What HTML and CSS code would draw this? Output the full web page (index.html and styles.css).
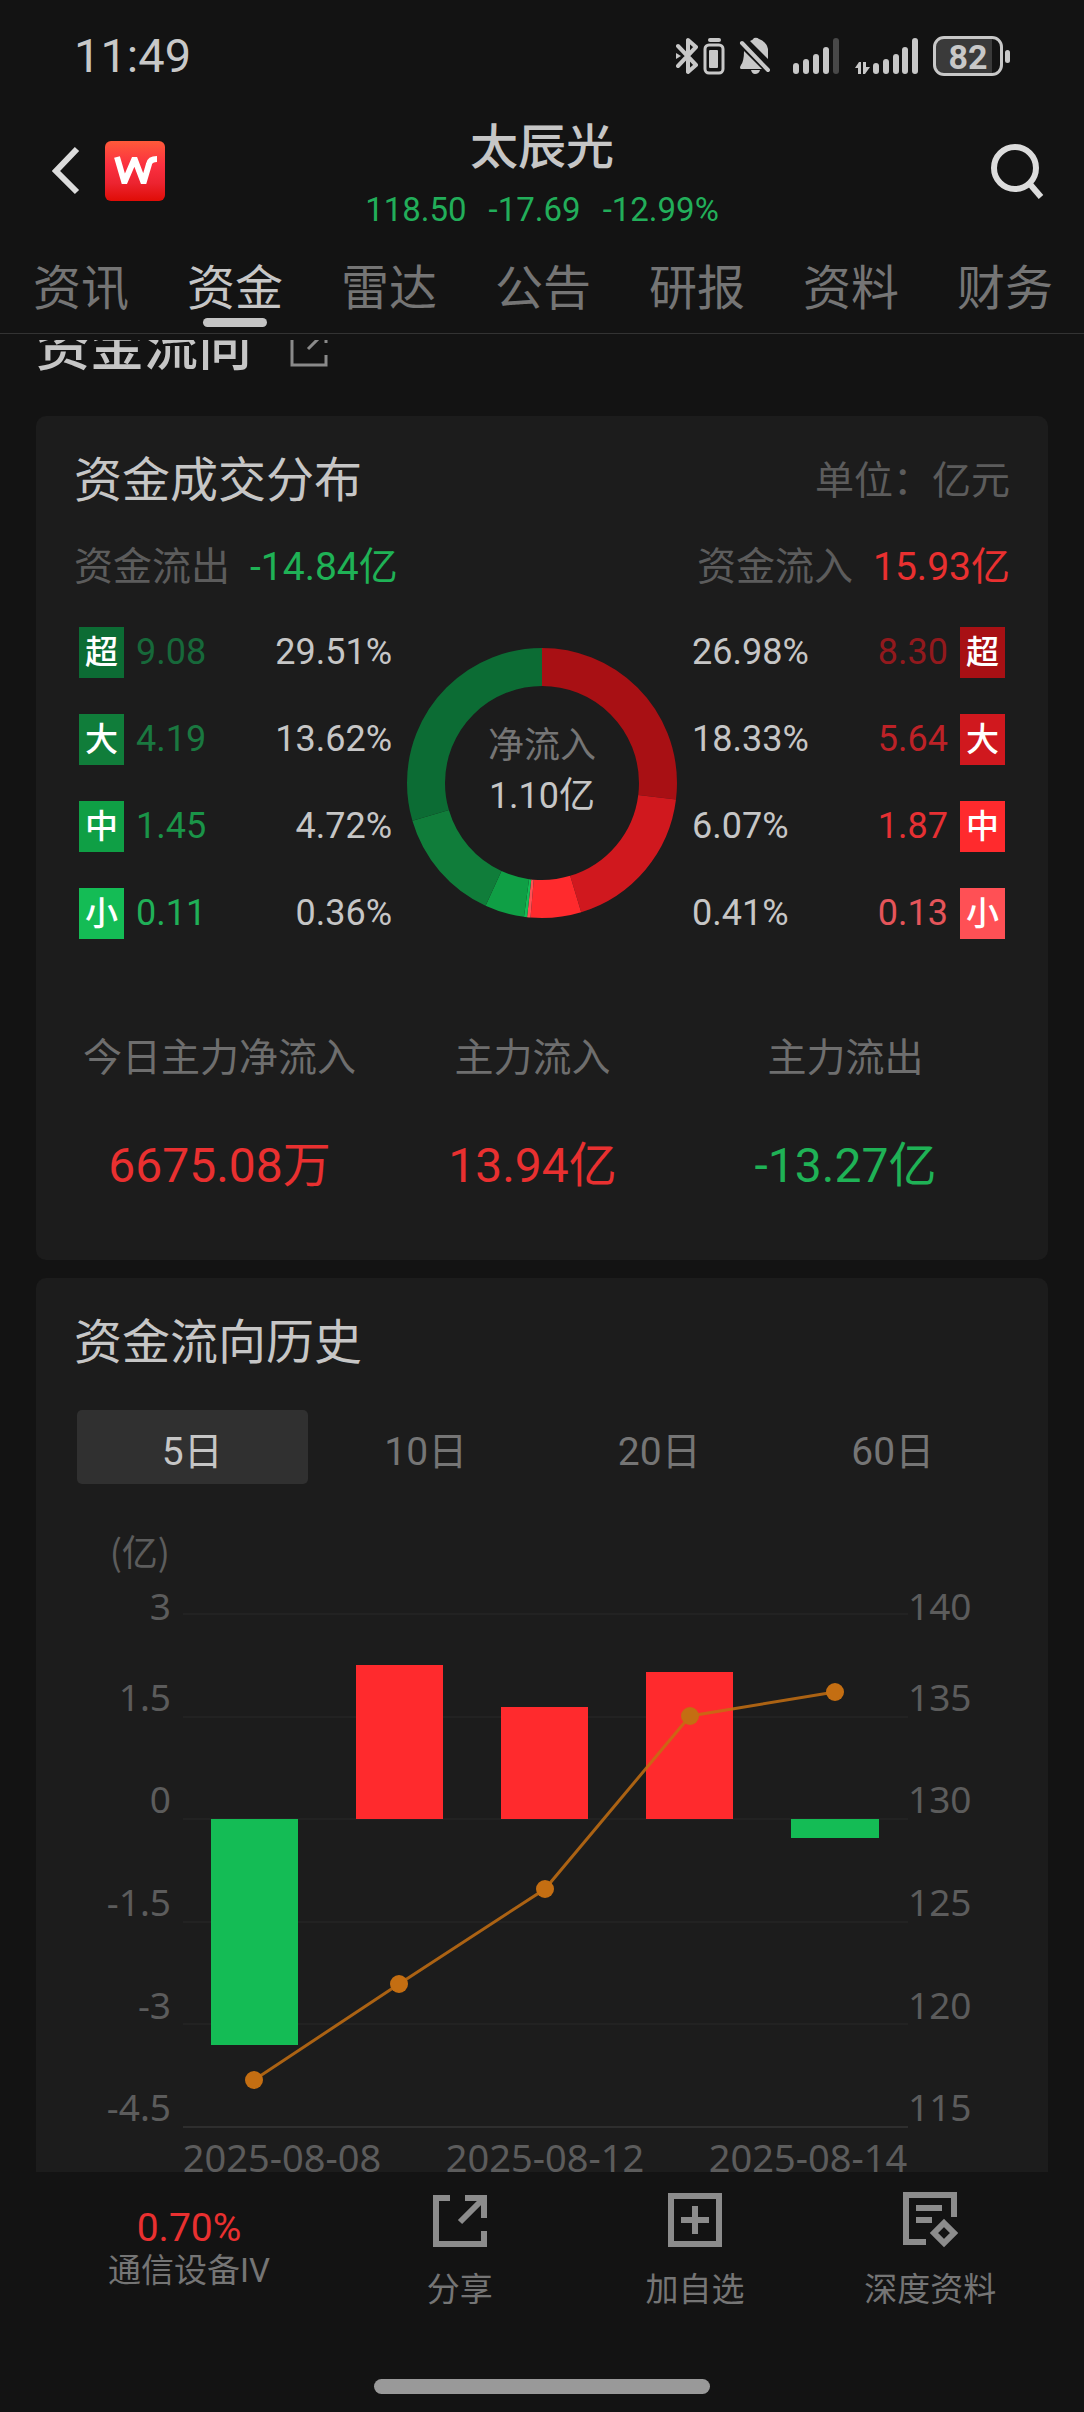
FILE: index.html
```html
<!DOCTYPE html>
<html lang="zh-CN">
<head>
<meta charset="utf-8">
<meta name="viewport" content="width=device-width, initial-scale=1">
<title>太辰光 资金</title>
<link rel="stylesheet" href="styles.css">
</head>
<body>
<div class="app">
  <header class="top">
    <div class="status">
      <time class="clock">11:49</time>
      <div class="status-icons">
        <svg class="i-bt" width="22" height="38" viewBox="0 0 22 38" fill="none" stroke="#c8c8c8" stroke-width="4" stroke-linecap="round" stroke-linejoin="round"><path d="M2 9L20 28L12 35V24M2 29L20 10L12 3V15"/><path d="M0 16L5 19L0 22Z" fill="#c8c8c8" stroke="none"/></svg>
        <svg class="i-cell" width="22" height="38" viewBox="0 0 22 38"><rect x="5" y="1" width="13" height="4" rx="2" fill="#c8c8c8"/><rect x="2" y="8" width="18" height="28" rx="4" fill="none" stroke="#c8c8c8" stroke-width="3"/><rect x="6" y="13" width="9" height="18" rx="1" fill="#c8c8c8"/></svg>
        <svg class="i-bell" width="32" height="38" viewBox="0 0 32 38" fill="#c8c8c8"><path d="M11 4Q14 3 15 1Q18 0 20 2Q28 5 29 12V22Z"/><path d="M5 14L23 32H2Q0 31 2 28Q5 24 5 14Z"/><path d="M3 6L29 33" stroke="#c8c8c8" stroke-width="4" stroke-linecap="round"/><path d="M12 33H21Q20 37 16 37Q13 37 12 33Z"/></svg>
        <svg class="i-sig" width="46" height="38" viewBox="0 0 46 38" fill="#c8c8c8"><rect x="0" y="26" width="6" height="11" rx="3"/><rect x="10" y="22" width="6" height="15" rx="3"/><rect x="20" y="17" width="6" height="20" rx="3"/><rect x="30" y="10" width="6" height="27" rx="3"/><rect x="40" y="1" width="6" height="36" rx="3" fill="#484848"/></svg>
        <svg class="i-sig2" width="64" height="38" viewBox="0 0 64 38" fill="#c8c8c8"><path d="M0 31L4 25H6V37H3V31ZM8 25H11V30H15L10 37H8Z"/><rect x="18" y="26" width="6" height="11" rx="3"/><rect x="28" y="22" width="6" height="15" rx="3"/><rect x="38" y="17" width="6" height="20" rx="3"/><rect x="47" y="10" width="6" height="27" rx="3"/><rect x="57" y="1" width="6" height="36" rx="3"/></svg>
        <div class="battery"><span class="battery-body">82</span><span class="battery-tip"></span></div>
      </div>
    </div>

    <div class="bar">
      <div class="bar-left">
        <button class="icon-btn" aria-label="返回"><svg width="28" height="50" viewBox="0 0 28 50" fill="none" stroke="#dcdcdc" stroke-width="6"><path d="M25 3L4 25L25 46"/></svg></button>
        <svg class="logo" width="60" height="60" viewBox="0 0 60 60"><defs><linearGradient id="lg" x1="0" y1="0" x2="0" y2="1"><stop offset="0" stop-color="#ff5a3a"/><stop offset=".4" stop-color="#fb3040"/><stop offset=".7" stop-color="#ec2430"/><stop offset="1" stop-color="#e00c06"/></linearGradient></defs><rect width="60" height="60" rx="6" fill="url(#lg)"/><path d="M12 16L19 40H20L29 19H30L38 40H39L44 23Q45 18 52 18" fill="none" stroke="#fff" stroke-width="6"/></svg>
      </div>
      <div class="stock">
        <h1 class="stock-name">太辰光</h1>
        <p class="quote"><span>118.50</span><span>-17.69</span><span>-12.99%</span></p>
      </div>
      <button class="icon-btn search" aria-label="搜索"><svg width="54" height="56" viewBox="0 0 54 56" fill="none" stroke="#dcdcdc" stroke-width="6"><circle cx="25" cy="25" r="21"/><path d="M39 40L51 54"/></svg></button>
    </div>

    <nav class="tabs">
      <a href="#">资讯</a><a href="#" class="on" aria-current="page">资金</a><a href="#">雷达</a><a href="#">公告</a><a href="#">研报</a><a href="#">资料</a><a href="#">财务</a>
    </nav>
  </header>

  <main class="content">
    <div class="page-title">
      <h2>资金流向</h2>
      <svg width="38" height="38" viewBox="0 0 38 38" fill="none" stroke="#8a8a8a" stroke-width="3"><path d="M12 2H2V36H36V26M23 2H36V14M36 2L18 20"/></svg>
    </div>

    <section class="card flow">
      <div class="card-head"><h3>资金成交分布</h3><span class="unit">单位：亿元</span></div>
      <div class="totals">
        <p><span>资金流出</span><b class="down">-14.84亿</b></p>
        <p><span>资金流入</span><b class="up">15.93亿</b></p>
      </div>
      <div class="dist">
        <ul class="side out">
          <li class="g1"><i>超</i><b>9.08</b><span>29.51%</span></li>
          <li class="g2"><i>大</i><b>4.19</b><span>13.62%</span></li>
          <li class="g3"><i>中</i><b>1.45</b><span>4.72%</span></li>
          <li class="g4"><i>小</i><b>0.11</b><span>0.36%</span></li>
        </ul>
        <div class="donut">
          <svg viewBox="0 0 270 270" fill="none" stroke-width="38">
            <g transform="rotate(-90 135 135)">
              <circle cx="135" cy="135" r="116" pathLength="10000" stroke="#a81014" stroke-dasharray="2698 7302"/>
              <circle cx="135" cy="135" r="116" pathLength="10000" stroke="#d0181e" stroke-dasharray="1833 8167" stroke-dashoffset="-2698"/>
              <circle cx="135" cy="135" r="116" pathLength="10000" stroke="#ff2a2d" stroke-dasharray="607 9393" stroke-dashoffset="-4531"/>
              <circle cx="135" cy="135" r="116" pathLength="10000" stroke="#ff5055" stroke-dasharray="41 9959" stroke-dashoffset="-5138"/>
              <circle cx="135" cy="135" r="116" pathLength="10000" stroke="#14bc55" stroke-dasharray="36 9964" stroke-dashoffset="-5179"/>
              <circle cx="135" cy="135" r="116" pathLength="10000" stroke="#0f9f45" stroke-dasharray="472 9528" stroke-dashoffset="-5215"/>
              <circle cx="135" cy="135" r="116" pathLength="10000" stroke="#107d3a" stroke-dasharray="1362 8638" stroke-dashoffset="-5687"/>
              <circle cx="135" cy="135" r="116" pathLength="10000" stroke="#0c6c34" stroke-dasharray="2951 7049" stroke-dashoffset="-7049"/>
            </g>
          </svg>
          <p class="net"><span>净流入</span><b>1.10亿</b></p>
        </div>
        <ul class="side in">
          <li class="r1"><i>超</i><b>8.30</b><span>26.98%</span></li>
          <li class="r2"><i>大</i><b>5.64</b><span>18.33%</span></li>
          <li class="r3"><i>中</i><b>1.87</b><span>6.07%</span></li>
          <li class="r4"><i>小</i><b>0.13</b><span>0.41%</span></li>
        </ul>
      </div>
      <dl class="stats">
        <div><dt>今日主力净流入</dt><dd class="up">6675.08万</dd></div>
        <div><dt>主力流入</dt><dd class="up">13.94亿</dd></div>
        <div><dt>主力流出</dt><dd class="down">-13.27亿</dd></div>
      </dl>
    </section>

    <section class="card history">
      <div class="card-head"><h3>资金流向历史</h3></div>
      <div class="seg">
        <button class="on" aria-pressed="true">5日</button><button>10日</button><button>20日</button><button>60日</button>
      </div>
      <svg class="chart" viewBox="0 0 1012 680" role="img" aria-label="5日资金流向">
        <g class="grid"><path d="M147 94H872M147 197H872M147 299H872M147 402H872M147 504H872"/><path class="axis" d="M147 607H872"/></g>
        <g class="bar-up"><rect x="320" y="145" width="87" height="154"/><rect x="465" y="187" width="87" height="112"/><rect x="610" y="152" width="87" height="147"/></g>
        <g class="bar-down"><rect x="175" y="299" width="87" height="226"/><rect x="755" y="299" width="88" height="19"/></g>
        <polyline class="price" points="218,560 363,464 509,369 654,196 799,172"/>
        <g class="dots"><circle cx="218" cy="560" r="9"/><circle cx="363" cy="464" r="9"/><circle cx="509" cy="369" r="9"/><circle cx="654" cy="196" r="9"/><circle cx="799" cy="172" r="9"/></g>
        <g class="lab end"><text class="cn" x="134" y="46">(亿)</text><text x="135" y="100">3</text><text x="135" y="191">1.5</text><text x="135" y="293">0</text><text x="135" y="396">-1.5</text><text x="135" y="499">-3</text><text x="135" y="601">-4.5</text></g>
        <g class="lab"><text x="872" y="100">140</text><text x="872" y="191">135</text><text x="872" y="293">130</text><text x="872" y="396">125</text><text x="872" y="499">120</text><text x="872" y="601">115</text></g>
        <g class="lab mid"><text x="246" y="652">2025-08-08</text><text x="509" y="652">2025-08-12</text><text x="772" y="652">2025-08-14</text></g>
      </svg>
    </section>
  </main>

  <footer class="bottom">
    <nav class="actions">
      <a href="#" class="sector"><b class="up">0.70%</b><span>通信设备IV</span></a>
      <button><svg width="56" height="56" viewBox="0 0 56 56" fill="none" stroke="#8c8c8c" stroke-width="6"><path d="M18 6H4V52H52V39M33 6H52V26M52 6L28 30"/></svg><span>分享</span></button>
      <button><svg width="56" height="56" viewBox="0 0 56 56" fill="none" stroke="#8c8c8c" stroke-width="6"><path d="M4 4H52V52H4ZM28 14V42M14 28H42"/></svg><span>加自选</span></button>
      <button><svg width="56" height="56" viewBox="0 0 56 56" fill="none" stroke="#8c8c8c" stroke-width="6"><path d="M24 50H4V3H52V25M14 16H40M14 28H30M42 31L52 41L42 51L32 41Z"/></svg><span>深度资料</span></button>
    </nav>
    <div class="home"></div>
  </footer>
</div>
</body>
</html>
```
FILE: styles.css
```css
* { box-sizing: border-box; margin: 0; padding: 0; }

body {
  background: #131313;
  color: #c6c6c6;
  font-family: Roboto, "Noto Sans CJK SC", sans-serif;
}

a { color: inherit; text-decoration: none; }
button { background: none; border: 0; color: inherit; font: inherit; cursor: pointer; }
ul { list-style: none; }
i { font-style: normal; }
b, h1, h2, h3 { font-weight: 400; }
svg { display: block; }

.up { color: #e93030; }
.down { color: #1fb256; }

.app { display: flex; flex-direction: column; height: 100vh; }

/* status bar */
.status { display: flex; justify-content: space-between; align-items: center; height: 112px; padding: 0 74px; }
.clock { font-size: 47px; line-height: 56px; color: #c8c8c8; }
.status-icons { display: flex; align-items: center; gap: 14px; }
.i-bt { margin-right: -9px; }
.i-bell { margin-right: 8px; }
.i-sig { margin-right: 2px; }
.battery { display: flex; align-items: center; gap: 2px; }
.battery-body {
  width: 70px; height: 40px; border: 3px solid #c8c8c8; border-radius: 11px;
  background: linear-gradient(90deg, #3a3a3a 88%, transparent 88%);
  font-size: 34px; line-height: 36px; font-weight: 700; text-align: center; color: #c8c8c8;
}
.battery-tip { width: 5px; height: 13px; border-radius: 3px; background: #c8c8c8; }

/* title bar */
.bar { display: grid; grid-template-columns: 1fr auto 1fr; align-items: center; padding: 0 40px; }
.bar-left { display: flex; align-items: center; gap: 25px; padding-left: 12px; }
.icon-btn { display: flex; }
.search { justify-self: end; }
.stock { padding-top: 8px; text-align: center; }
.stock-name { font-size: 48px; line-height: 56px; font-weight: 500; }
.quote { display: flex; justify-content: center; gap: 22px; margin-top: 14px; font-size: 33px; line-height: 40px; color: #22ae5a; }

/* section tabs */
.tabs {
  display: flex; justify-content: space-between;
  margin: 31px 0 6px; padding: 0 31px 6px 33px;
  border-bottom: 1px solid #333;
  font-size: 48px; line-height: 56px; color: #757575;
}
.tabs a { display: flex; flex-direction: column; align-items: center; gap: 1px; padding-bottom: 10px; }
.tabs .on { color: #c6c6c6; padding-bottom: 0; }
.tabs .on::after { content: ""; width: 64px; height: 9px; border-radius: 5px; background: #c4c4c4; }

/* content */
.content { flex: 1; min-height: 0; overflow: hidden; padding: 0 36px; display: flex; flex-direction: column; }
.content > * { flex: none; }
.page-title { display: flex; align-items: center; gap: 38px; margin: -22px 0 38px; }
.page-title h2 { font-size: 54px; line-height: 60px; font-weight: 500; }
.card { background: #1c1c1c; border-radius: 10px; padding-top: 37px; margin-bottom: 18px; }
.card-head { display: flex; justify-content: space-between; align-items: center; padding: 0 38px; }
.card-head h3 { font-size: 48px; line-height: 56px; }
.unit { font-size: 39px; line-height: 48px; color: #5c5c5c; }

.totals { display: flex; justify-content: space-between; padding: 0 38px; margin-top: 34px; font-size: 39px; line-height: 48px; }
.totals p { display: flex; gap: 20px; }
.totals span { color: #5c5c5c; }

.dist { display: grid; grid-template-columns: 1fr 270px 1fr; align-items: center; padding: 0 43px; margin-top: 36px; }
.side { display: grid; gap: 36px; font-size: 36px; line-height: 51px; }
.side li { display: flex; align-items: center; gap: 12px; }
.side i { width: 45px; height: 51px; font-size: 33px; font-weight: 500; text-align: center; color: #fff; }
.side span { margin-left: auto; }
.out { padding-right: 15px; }
.in { padding-left: 15px; }
.in li { flex-direction: row-reverse; }
.in span { margin: 0 auto 0 0; }
.g1 i { background: #0c6c34; } .g1 b { color: #17683a; }
.g2 i { background: #107d3a; } .g2 b { color: #1a7840; }
.g3 i { background: #0f9f45; } .g3 b { color: #1a9448; }
.g4 i { background: #14bc55; } .g4 b { color: #20b058; }
.r1 i { background: #a81014; } .r1 b { color: #92191d; }
.r2 i { background: #d0181e; } .r2 b { color: #bd2227; }
.r3 i { background: #ff2a2d; } .r3 b { color: #e63033; }
.r4 i { background: #ff5055; } .r4 b { color: #e5555a; }

.donut { display: grid; place-items: center; }
.donut > * { grid-area: 1 / 1; }
.donut svg { width: 100%; }
.net { display: grid; gap: 2px; font-size: 36px; line-height: 48px; text-align: center; padding-bottom: 24px; }
.net span { color: #757575; }

.stats { display: grid; grid-template-columns: repeat(3, 1fr); padding: 0 46px 66px 27px; margin-top: 95px; text-align: center; }
.stats dt { font-size: 39px; line-height: 48px; color: #6e6e6e; }
.stats dd { font-size: 48px; line-height: 56px; margin-top: 56px; }

.seg { display: grid; grid-template-columns: repeat(4, 1fr); gap: 3px; margin: 39px 40px 36px 41px; font-size: 39px; color: #757575; }
.seg button { height: 74px; padding-top: 2px; border-radius: 5px; }
.seg .on { background: #303030; color: #c6c6c6; }

.chart { width: 100%; }
.grid path { stroke: #222; stroke-width: 2; }
.grid .axis { stroke: #2e2e2e; }
.bar-up { fill: #ff2a2d; }
.bar-down { fill: #14bc55; }
.price { fill: none; stroke: #c46e12; stroke-width: 3; stroke-opacity: .85; }
.dots { fill: #c46e12; }
.lab { fill: #5c5c5c; font: 37px "Noto Sans", sans-serif; }
.lab .cn { font: 36px "Noto Sans CJK SC", sans-serif; }
.end { text-anchor: end; }
.mid { text-anchor: middle; font-size: 38px; }

/* bottom bar */
.bottom { background: #131313; padding: 20px 36px 18px; }
.actions { display: grid; grid-template-columns: 306px repeat(3, 1fr); align-items: start; font-size: 33px; line-height: 40px; color: #757575; }
.actions > * { display: flex; flex-direction: column; align-items: center; gap: 22px; }
.actions .sector { gap: 3px; padding-top: 16px; }
.sector b { font-size: 39px; }
.home { width: 336px; height: 15px; margin: 69px auto 0; border-radius: 8px; background: #999; }
```
